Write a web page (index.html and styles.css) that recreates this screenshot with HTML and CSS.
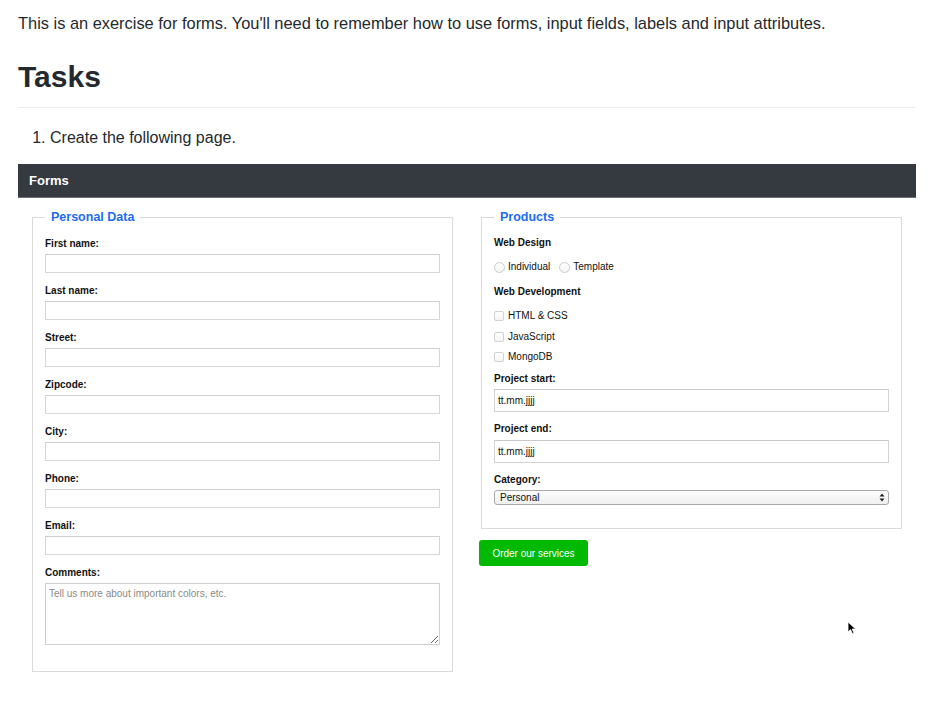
FILE: index.html
```html
<!DOCTYPE html>
<html lang="en">
<head>
<meta charset="utf-8">
<title>Forms exercise</title>
<link rel="stylesheet" href="styles.css">
</head>
<body>
<p class="intro">This is an exercise for forms. You'll need to remember how to use forms, input fields, labels and input attributes.</p>
<h2 class="title">Tasks</h2>
<ol class="tasks">
  <li>Create the following page.</li>
</ol>

<div class="bar">Forms</div>
<form class="form-body">
  <div class="col">
    <fieldset class="box">
      <legend class="legend">Personal Data</legend>
      <label class="lbl" for="fn">First name:</label>
      <input class="field" id="fn" type="text">
      <label class="lbl" for="ln">Last name:</label>
      <input class="field" id="ln" type="text">
      <label class="lbl" for="st">Street:</label>
      <input class="field" id="st" type="text">
      <label class="lbl" for="zip">Zipcode:</label>
      <input class="field" id="zip" type="text">
      <label class="lbl" for="city">City:</label>
      <input class="field" id="city" type="text">
      <label class="lbl" for="ph">Phone:</label>
      <input class="field" id="ph" type="text">
      <label class="lbl" for="em">Email:</label>
      <input class="field" id="em" type="text">
      <label class="lbl" for="cm">Comments:</label>
      <textarea class="area" id="cm" placeholder="Tell us more about important colors, etc."></textarea>
    </fieldset>
  </div>
  <div class="col">
    <fieldset class="box box-right">
      <legend class="legend">Products</legend>
      <div class="lbl lbl-design">Web Design</div>
      <div class="radio-row">
        <label class="opt"><input class="radio" type="radio" name="wd"><span>Individual</span></label>
        <label class="opt"><input class="radio" type="radio" name="wd"><span>Template</span></label>
      </div>
      <div class="lbl lbl-dev">Web Development</div>
      <div class="checks">
        <label class="opt"><input class="check" type="checkbox"><span>HTML &amp; CSS</span></label>
        <label class="opt"><input class="check" type="checkbox"><span>JavaScript</span></label>
        <label class="opt"><input class="check" type="checkbox"><span>MongoDB</span></label>
      </div>
      <label class="lbl lbl-tight" for="ps">Project start:</label>
      <input class="date" id="ps" type="text" value="tt.mm.jjjj">
      <label class="lbl lbl-tight lbl-end" for="pe">Project end:</label>
      <input class="date date-end" id="pe" type="text" value="tt.mm.jjjj">
      <label class="lbl lbl-tight" for="cat">Category:</label>
      <div class="select-wrap">
        <select class="select" id="cat">
          <option>Personal</option>
          <option>Business</option>
        </select>
        <svg class="select-arrows" width="6" height="9" viewBox="0 0 6 9"><path d="M3 0.5 L5.5 3.5 H0.5 Z M3 8.5 L5.5 5.5 H0.5 Z" fill="#222"/></svg>
      </div>
    </fieldset>
    <button class="order" type="button">Order our services</button>
  </div>
</form>
<svg class="cursor" width="10" height="14" viewBox="0 0 10 14"><path d="M1 1 L1 11 L3.5 8.6 L5.3 12.6 L6.9 11.9 L5.2 8 L8.6 8 Z" fill="#000" stroke="#fff" stroke-width="0.8"/></svg>
</body>
</html>
```

FILE: styles.css
```css
* { box-sizing: border-box; }

html, body { margin: 0; padding: 0; background: #fff; }

body {
  padding: 0 20px 0 18px;
  font-family: "Liberation Sans", Arial, sans-serif;
  color: #24292e;
  position: relative;
}

.intro {
  margin: 0;
  padding-top: 11px;
  font-size: 16.4px;
  line-height: 24px;
}

.title {
  margin: 23px 0 0;
  padding-bottom: 11px;
  font-size: 30px;
  line-height: 38px;
  font-weight: 700;
  border-bottom: 1px solid #eaecef;
}

.tasks {
  margin: 18px 0 14px;
  padding-left: 32px;
  font-size: 16px;
  line-height: 24px;
}

.bar {
  height: 34px;
  line-height: 33px;
  padding-left: 11px;
  background: #343a40;
  color: #fff;
  font-weight: 700;
  font-size: 13px;
  border-bottom: 1px solid #6c7075;
}

.form-body {
  display: grid;
  grid-template-columns: 425px 425px;
  column-gap: 24px;
  padding: 12px 12px 0;
  color: #111;
}

.col {
  display: flex;
  flex-direction: column;
  align-items: flex-start;
}

.box {
  width: 421px;
  margin: 0 2px;
  padding: 13px 12px 14px;
  border: 1px solid #dadada;
  display: flex;
  flex-direction: column;
  align-items: stretch;
  min-width: 0;
}

.legend {
  padding: 0 6px;
  font-size: 12.5px;
  line-height: 15px;
  font-weight: 700;
  color: #1d6cf0;
}

.lbl {
  display: block;
  font-size: 10px;
  line-height: 12px;
  font-weight: 700;
  color: #111;
  margin-bottom: 4px;
}

.field {
  display: block;
  width: 100%;
  height: 19px;
  margin: 0 0 12px;
  border: 1px solid #d6d6d6;
  border-top-color: #cfcfcf;
  background: #fff;
  font: 10px "Liberation Sans", Arial, sans-serif;
  padding: 0 3px;
  outline: none;
}

.area {
  display: block;
  width: 100%;
  height: 62px;
  margin: 0 0 12px;
  border: 1px solid #cfcfcf;
  padding: 3px 3px;
  font: 10px/13px "Liberation Sans", Arial, sans-serif;
  color: #333;
  resize: vertical;
  outline: none;
}

.area::placeholder { color: #8a8a8a; }

.box-right { padding-top: 12px; padding-bottom: 23px; }

.lbl-design { margin-bottom: 5px; }

.radio-row {
  display: flex;
  gap: 9px;
  height: 14px;
  margin: 6px 0 12px;
}

.opt {
  display: flex;
  align-items: center;
  gap: 3px;
  font-size: 10px;
  line-height: 14px;
  color: #111;
}

.radio {
  appearance: none;
  -webkit-appearance: none;
  width: 11px;
  height: 11px;
  margin: 0;
  border: 1px solid #cdcdcd;
  border-radius: 50%;
  background: linear-gradient(#fff, #f3f3f3);
}

.lbl-dev { margin-bottom: 5px; }

.checks {
  display: flex;
  flex-direction: column;
  gap: 6.5px;
  margin: 6px 0 9px;
}

.check {
  appearance: none;
  -webkit-appearance: none;
  width: 10px;
  height: 10px;
  margin: 0;
  border: 1px solid #d2d2d2;
  border-radius: 2px;
  background: linear-gradient(#fff, #f4f4f4);
}

.checks .opt { gap: 4px; }

.lbl-tight { margin-bottom: 4px; }
.lbl-end { margin-bottom: 5px; }

.date {
  display: block;
  width: 100%;
  height: 23px;
  margin: 0 0 11px;
  padding: 0 3px;
  border: 1px solid #d3d3d3;
  border-top-color: #c9c9c9;
  font: 10px "Liberation Sans", Arial, sans-serif;
  color: #111;
  outline: none;
}

.select-wrap {
  position: relative;
  width: 100%;
}

.select {
  appearance: none;
  -webkit-appearance: none;
  display: block;
  width: 100%;
  height: 15px;
  margin: 0;
  padding: 0 0 0 5px;
  border: 1px solid #a9a9a9;
  border-radius: 3px;
  background: linear-gradient(#fdfdfd, #efefef);
  font: 10px/13px "Liberation Sans", Arial, sans-serif;
  color: #111;
  outline: none;
}

.select-arrows {
  position: absolute;
  right: 4px;
  top: 3px;
  pointer-events: none;
}

.order {
  margin-top: 11px;
  width: 109px;
  height: 26px;
  border: 0;
  border-radius: 3px;
  background: #00b900;
  color: #fff;
  font: 10px "Liberation Sans", Arial, sans-serif;
  padding: 0;
}

.cursor {
  position: absolute;
  left: 847px;
  top: 621px;
}
```
